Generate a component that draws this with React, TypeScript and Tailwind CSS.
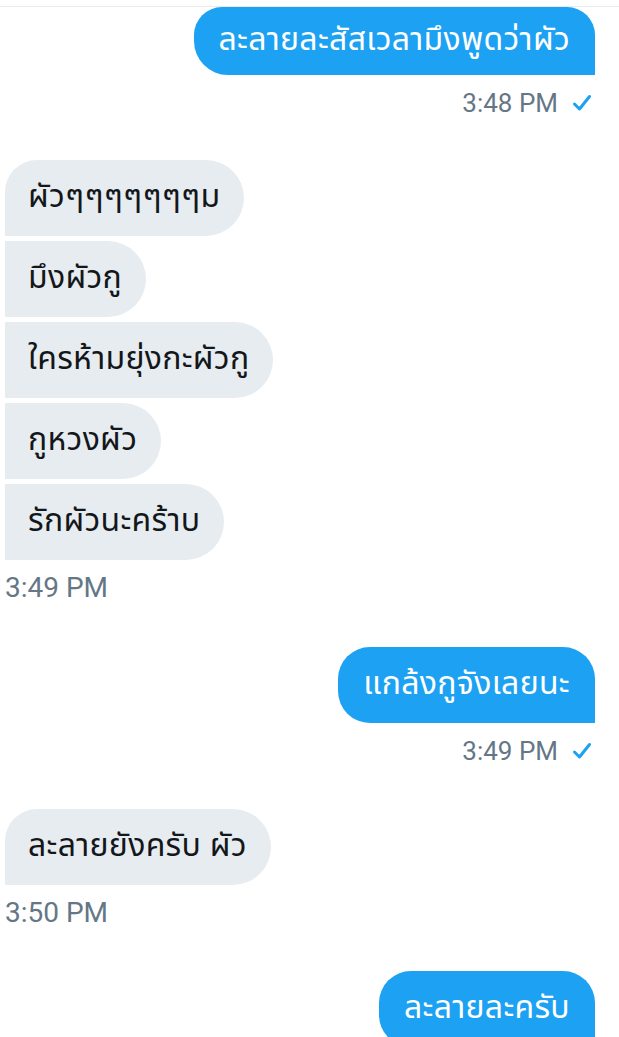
import React from "react";

const font = { fontFamily: '"Noto Sans Thai", "Noto Sans", Roboto, "Liberation Sans", sans-serif' };
const timeFont = { fontFamily: 'Roboto, "Liberation Sans", sans-serif' };

function Check() {
  return (
    <svg width="20" height="18" viewBox="0 0 20 18" className="ml-[14px]">
      <path d="M2.5 10 L7.5 15 L17.5 2.5" fill="none" stroke="#1da1f2" strokeWidth="3" strokeLinecap="round" strokeLinejoin="round" />
    </svg>
  );
}

function Sent({ text, time, h = "h-[76px]", top = false }: { text: string; time?: string; h?: string; top?: boolean }) {
  return (
    <div className="flex flex-col items-end">
      <div
        className={`${h} mr-[24px] flex items-center bg-[#1da1f2] text-white text-[32px] tracking-[0.3px] px-[25px] ${top ? "rounded-tl-[28px] rounded-tr-[28px] rounded-bl-[34px]" : "rounded-tl-[32px] rounded-tr-[32px] rounded-bl-[32px]"} rounded-br-none`}
      >
        <span className="leading-none pb-[2px]">{text}</span>
      </div>
      {time && (
        <div className="mr-[27px] mt-[12px] h-[32px] flex items-center text-[#657786] text-[26px]" style={timeFont}>
          <span>{time}</span>
          <Check />
        </div>
      )}
    </div>
  );
}

function Received({ texts, time }: { texts: string[]; time: string }) {
  return (
    <div className="flex flex-col items-start pl-[5px]">
      <div className="flex flex-col items-start gap-[5px]">
        {texts.map((t, i) => (
          <div
            key={i}
            className={`h-[76px] flex items-center bg-[#e6ecf0] text-[#14171a] text-[32px] tracking-[0.3px] pl-[23px] pr-[24px] rounded-r-[38px] ${i === 0 ? "rounded-tl-[32px]" : ""}`}
          >
            <span className="leading-none pb-[2px]">{t}</span>
          </div>
        ))}
      </div>
      <div className="mt-[12px] h-[32px] flex items-center text-[#657786] text-[28px]" style={timeFont}>
        {time}
      </div>
    </div>
  );
}

export default function App() {
  return (
    <div className="w-[619px] h-[1037px] bg-white overflow-hidden" style={font}>
      <div className="h-[6px]" />
      <div className="h-px bg-[#e6ecf0]" />
      <Sent text="ละลายละสัสเวลามึงพูดว่าผัว" time="3:48 PM" h="h-[68px]" top />
      <div className="h-[41px]" />
      <Received texts={["ผัวๆๆๆๆๆๆๆม", "มึงผัวกู", "ใครห้ามยุ่งกะผัวกู", "กูหวงผัว", "รักผัวนะคร้าบ"]} time="3:49 PM" />
      <div className="h-[43px]" />
      <Sent text="แกล้งกูจังเลยนะ" time="3:49 PM" />
      <div className="h-[42px]" />
      <Received texts={["ละลายยังครับ ผัว"]} time="3:50 PM" />
      <div className="h-[42px]" />
      <Sent text="ละลายละครับ" />
    </div>
  );
}
